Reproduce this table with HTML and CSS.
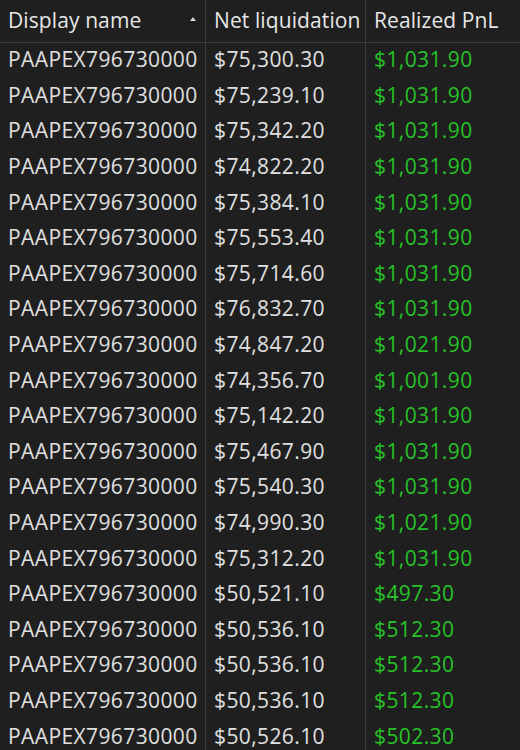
FILE: index.html
```html
<!DOCTYPE html>
<html>
<head>
<meta charset="utf-8">
<link rel="stylesheet" href="styles.css">
</head>
<body>
<div class="grid">
  <div class="hcell first"><span>Display name</span><span class="sort"></span></div>
  <div class="hcell">Net liquidation</div>
  <div class="hcell">Realized PnL</div>

  <div class="cell first">PAAPEX796730000</div><div class="cell">$75,300.30</div><div class="cell pnl">$1,031.90</div>
  <div class="cell first">PAAPEX796730000</div><div class="cell">$75,239.10</div><div class="cell pnl">$1,031.90</div>
  <div class="cell first">PAAPEX796730000</div><div class="cell">$75,342.20</div><div class="cell pnl">$1,031.90</div>
  <div class="cell first">PAAPEX796730000</div><div class="cell">$74,822.20</div><div class="cell pnl">$1,031.90</div>
  <div class="cell first">PAAPEX796730000</div><div class="cell">$75,384.10</div><div class="cell pnl">$1,031.90</div>
  <div class="cell first">PAAPEX796730000</div><div class="cell">$75,553.40</div><div class="cell pnl">$1,031.90</div>
  <div class="cell first">PAAPEX796730000</div><div class="cell">$75,714.60</div><div class="cell pnl">$1,031.90</div>
  <div class="cell first">PAAPEX796730000</div><div class="cell">$76,832.70</div><div class="cell pnl">$1,031.90</div>
  <div class="cell first">PAAPEX796730000</div><div class="cell">$74,847.20</div><div class="cell pnl">$1,021.90</div>
  <div class="cell first">PAAPEX796730000</div><div class="cell">$74,356.70</div><div class="cell pnl">$1,001.90</div>
  <div class="cell first">PAAPEX796730000</div><div class="cell">$75,142.20</div><div class="cell pnl">$1,031.90</div>
  <div class="cell first">PAAPEX796730000</div><div class="cell">$75,467.90</div><div class="cell pnl">$1,031.90</div>
  <div class="cell first">PAAPEX796730000</div><div class="cell">$75,540.30</div><div class="cell pnl">$1,031.90</div>
  <div class="cell first">PAAPEX796730000</div><div class="cell">$74,990.30</div><div class="cell pnl">$1,021.90</div>
  <div class="cell first">PAAPEX796730000</div><div class="cell">$75,312.20</div><div class="cell pnl">$1,031.90</div>
  <div class="cell first">PAAPEX796730000</div><div class="cell">$50,521.10</div><div class="cell pnl">$497.30</div>
  <div class="cell first">PAAPEX796730000</div><div class="cell">$50,536.10</div><div class="cell pnl">$512.30</div>
  <div class="cell first">PAAPEX796730000</div><div class="cell">$50,536.10</div><div class="cell pnl">$512.30</div>
  <div class="cell first">PAAPEX796730000</div><div class="cell">$50,536.10</div><div class="cell pnl">$512.30</div>
  <div class="cell first">PAAPEX796730000</div><div class="cell">$50,526.10</div><div class="cell pnl">$502.30</div>
</div>
</body>
</html>
```
FILE: styles.css
```css
html, body {
  margin: 0;
  padding: 0;
  background: #1f1f1f;
}
body {
  width: 520px;
  height: 750px;
  overflow: hidden;
  font-family: "Open Sans", "Noto Sans", sans-serif;
  font-size: 21px;
  letter-spacing: 0.1px;
  color: #e0e0e0;
}
.grid {
  display: grid;
  grid-template-columns: 206px 160px 154px;
  grid-template-rows: 43px;
  grid-auto-rows: 35.6px;
}
.hcell {
  display: flex;
  align-items: center;
  padding: 0 8px 3px;
  border-bottom: 1px solid #3a3a3a;
  border-right: 1px solid #3a3a3a;
  color: #e6e6e6;
  white-space: nowrap;
  overflow: hidden;
}
.hcell:nth-child(3) { border-right: none; }
.hcell.first { justify-content: space-between; padding-right: 9px; }
.sort {
  width: 0;
  height: 0;
  border-left: 3.5px solid transparent;
  border-right: 3.5px solid transparent;
  border-bottom: 4px solid #d8d8d8;
  margin-bottom: 1px;
}
.cell {
  display: flex;
  align-items: center;
  padding: 0 6px 3px 8px;
  border-right: 1px solid #3a3a3a;
  white-space: nowrap;
  overflow: hidden;
  letter-spacing: 0.4px;
}
.cell.pnl {
  border-right: none;
  color: #27c227;
}
```
